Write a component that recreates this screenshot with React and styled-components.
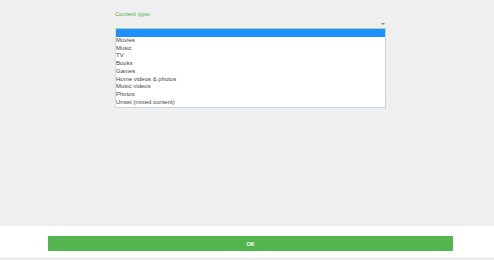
import React from "react";
import styled, { createGlobalStyle } from "styled-components";

const Global = createGlobalStyle`
  html, body { margin: 0; padding: 0; background: #efefef; }
  body { font-family: "Liberation Sans", Arial, sans-serif; }
`;

const Page = styled.div`
  width: 494px;
  height: 260px;
  display: flex;
  flex-direction: column;
  background: #efefef;
`;

const Content = styled.div`
  height: 226px;
  padding: 10px 0 0 115px;
  box-sizing: border-box;
`;

const Field = styled.div`
  width: 271px;
  display: flex;
  flex-direction: column;
`;

const Label = styled.div`
  color: #4caf50;
  font-size: 6px;
  line-height: 8px;
  height: 8px;
`;

const SelectBar = styled.div`
  height: 9px;
  margin-top: 1px;
  border-bottom: 1px solid #a8d3a8;
  display: flex;
  justify-content: flex-end;
  align-items: center;
  padding-right: 1px;
`;

const Arrow = styled.div`
  width: 0;
  height: 0;
  border-left: 2px solid transparent;
  border-right: 2px solid transparent;
  border-top: 2px solid #888;
`;

const List = styled.div`
  background: #fff;
  border: 1px solid #c6d2e6;
  border-top: none;
  border-left-color: #d6dcea;
  display: flex;
  flex-direction: column;
`;

const Option = styled.div`
  height: 7.75px;
  line-height: 7.75px;
  font-size: 6px;
  color: #444;
  white-space: nowrap;
  background: ${(p) => (p.$selected ? "#1e90ff" : "transparent")};
`;

const Footer = styled.div`
  flex: 1;
  background: #fff;
  padding: 10px 41px 0 48px;
  border-bottom: 1px solid #e4e4e4;
  box-sizing: border-box;
  margin-bottom: 1px;
`;

const OkButton = styled.button`
  width: 405px;
  height: 15px;
  border: none;
  border-radius: 1px;
  background: #53b450;
  color: #fff;
  font-family: "Liberation Sans", Arial, sans-serif;
  font-weight: bold;
  font-size: 5.5px;
  padding: 0;
  display: block;
  box-shadow: 0 0 1px rgba(0,0,0,0.3);
`;

const options = [
  "",
  "Movies",
  "Music",
  "TV",
  "Books",
  "Games",
  "Home videos & photos",
  "Music videos",
  "Photos",
  "Unset (mixed content)",
];

export default function App() {
  return (
    <>
      <Global />
      <Page>
        <Content>
          <Field>
            <Label>Content type:</Label>
            <SelectBar>
              <Arrow />
            </SelectBar>
            <List>
              {options.map((o, i) => (
                <Option key={i} $selected={i === 0}>
                  {o || "\u00a0"}
                </Option>
              ))}
            </List>
          </Field>
        </Content>
        <Footer>
          <OkButton>OK</OkButton>
        </Footer>
      </Page>
    </>
  );
}
